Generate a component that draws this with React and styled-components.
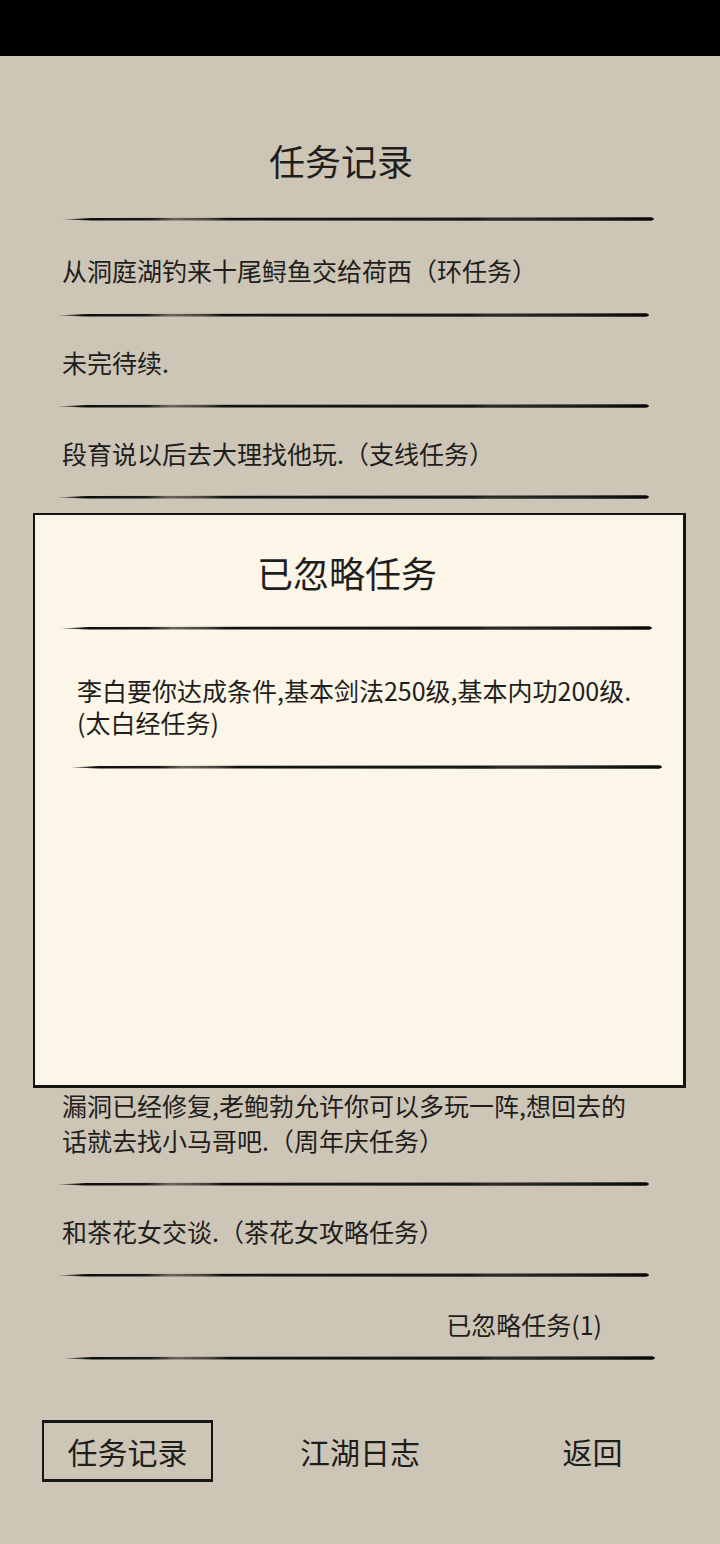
import React, { useId } from "react";
import styled, { createGlobalStyle } from "styled-components";

const GlobalStyle = createGlobalStyle`
  html, body { margin: 0; padding: 0; background: #cdc6b7; }
  * { box-sizing: border-box; }
`;

const Page = styled.div`
  position: relative;
  width: 720px;
  height: 1544px;
  overflow: hidden;
  background: #cdc6b7;
  color: #1f1e1c;
  font-family: "Noto Sans CJK SC", "Noto Sans", sans-serif;
`;

const StatusBar = styled.div`
  height: 56px;
  background: #000;
`;

const Heading = styled.h1`
  margin: 0;
  padding: 80px 38px 32px 0;
  text-align: center;
  font-size: 36px;
  font-weight: 400;
  line-height: 48px;
`;

const LineSvg = styled.svg`
  display: block;
  margin-left: ${(p) => p.$offset}px;
`;

/* ink brush divider: tapered at the left, a paler dry patch, rounded right end */
function BrushLine({ offset = 58, width = 595 }) {
  const raw = useId();
  const id = "ink" + raw.replace(/[^a-zA-Z0-9_-]/g, "");
  return (
    <LineSvg
      $offset={offset}
      width={width}
      height="6"
      viewBox="0 0 600 6"
      preserveAspectRatio="none"
      aria-hidden="true"
    >
      <defs>
        <linearGradient id={id} x1="0" x2="1" y1="0" y2="0">
          <stop offset="0" stopColor="#2a2a2a" stopOpacity="0.45" />
          <stop offset="0.04" stopColor="#0d0d0d" />
          <stop offset="0.15" stopColor="#1a1a1a" />
          <stop offset="0.19" stopColor="#6a665d" />
          <stop offset="0.25" stopColor="#45423c" />
          <stop offset="0.28" stopColor="#131313" />
          <stop offset="0.7" stopColor="#181818" />
          <stop offset="0.73" stopColor="#2d2c2a" />
          <stop offset="0.9" stopColor="#1a1a1a" />
          <stop offset="1" stopColor="#080808" />
        </linearGradient>
      </defs>
      <path d="M0 3.4 L30 1.9 L594 1.3 Q600 3 594 4.8 L30 4.4 Z" fill={`url(#${id})`} />
    </LineSvg>
  );
}

const Row = styled.div`
  padding: ${(p) => p.$pt ?? 27}px ${(p) => p.$pr ?? 0}px ${(p) => p.$pb ?? 23}px 62px;
  font-size: 25px;
  line-height: 35px;
  text-align: ${(p) => p.$align ?? "left"};
`;

const RowText = styled.div`
  max-width: 575px;
  display: ${(p) => (p.$align === "right" ? "inline-block" : "block")};
`;

/* part of the list that sits under the open dialog */
const CoveredRows = styled.div`
  height: 555px;
`;

const Tabs = styled.nav`
  display: grid;
  grid-template-columns: 255px 210px 255px;
  justify-items: center;
  align-items: center;
  margin-top: 59px;
`;

const Tab = styled.div`
  height: 62px;
  width: ${(p) => (p.$active ? "171px" : "auto")};
  font-size: 30px;
  line-height: 56px;
  text-align: center;
  border-style: solid;
  border-color: ${(p) => (p.$active ? "#151515" : "transparent")};
  border-width: 3px 2px 3px 2px;
`;

const Dialog = styled.section`
  position: absolute;
  top: 513px;
  left: 33px;
  width: 653px;
  height: 575px;
  background: #fcf6e8;
  border-style: solid;
  border-color: #141414;
  border-width: 2px 3px 3px 2px;
`;

const DialogTitle = styled.h2`
  margin: 0;
  padding: 33px 24px 29px 0;
  text-align: center;
  font-size: 36px;
  font-weight: 400;
  line-height: 48px;
`;

const DialogText = styled.p`
  margin: 0;
  padding: 43px 0 26px 42px;
  width: 620px;
  font-size: 25px;
  line-height: 32px;
`;

const topTasks = [
  { text: "从洞庭湖钓来十尾鲟鱼交给荷西（环任务）", pt: 31, pb: 24 },
  { text: "未完待续." },
  { text: "段育说以后去大理找他玩.（支线任务）" },
];

const bottomTasks = [
  { text: "漏洞已经修复,老鲍勃允许你可以多玩一阵,想回去的话就去找小马哥吧.（周年庆任务）" },
  { text: "和茶花女交谈.（茶花女攻略任务）" },
];

function TaskRows({ items }) {
  return items.map((t, i) => (
    <React.Fragment key={i}>
      <Row $pt={t.pt} $pb={t.pb}>
        <RowText>{t.text}</RowText>
      </Row>
      <BrushLine offset={57} />
    </React.Fragment>
  ));
}

export default function App() {
  return (
    <>
      <GlobalStyle />
      <Page>
        <StatusBar />
        <Heading>任务记录</Heading>
        <BrushLine offset={62} />
        <TaskRows items={topTasks} />
        <CoveredRows />
        <BrushLine offset={57} />
        <TaskRows items={bottomTasks} />
        <Row $align="right" $pr={118} $pt={29} $pb={13}>
          <RowText $align="right">已忽略任务(1)</RowText>
        </Row>
        <BrushLine offset={63} />
        <Tabs>
          <Tab $active>任务记录</Tab>
          <Tab>江湖日志</Tab>
          <Tab>返回</Tab>
        </Tabs>

        <Dialog>
          <DialogTitle>已忽略任务</DialogTitle>
          <BrushLine offset={25} />
          <DialogText>李白要你达成条件,基本剑法250级,基本内功200级.(太白经任务)</DialogText>
          <BrushLine offset={35} />
        </Dialog>
      </Page>
    </>
  );
}
